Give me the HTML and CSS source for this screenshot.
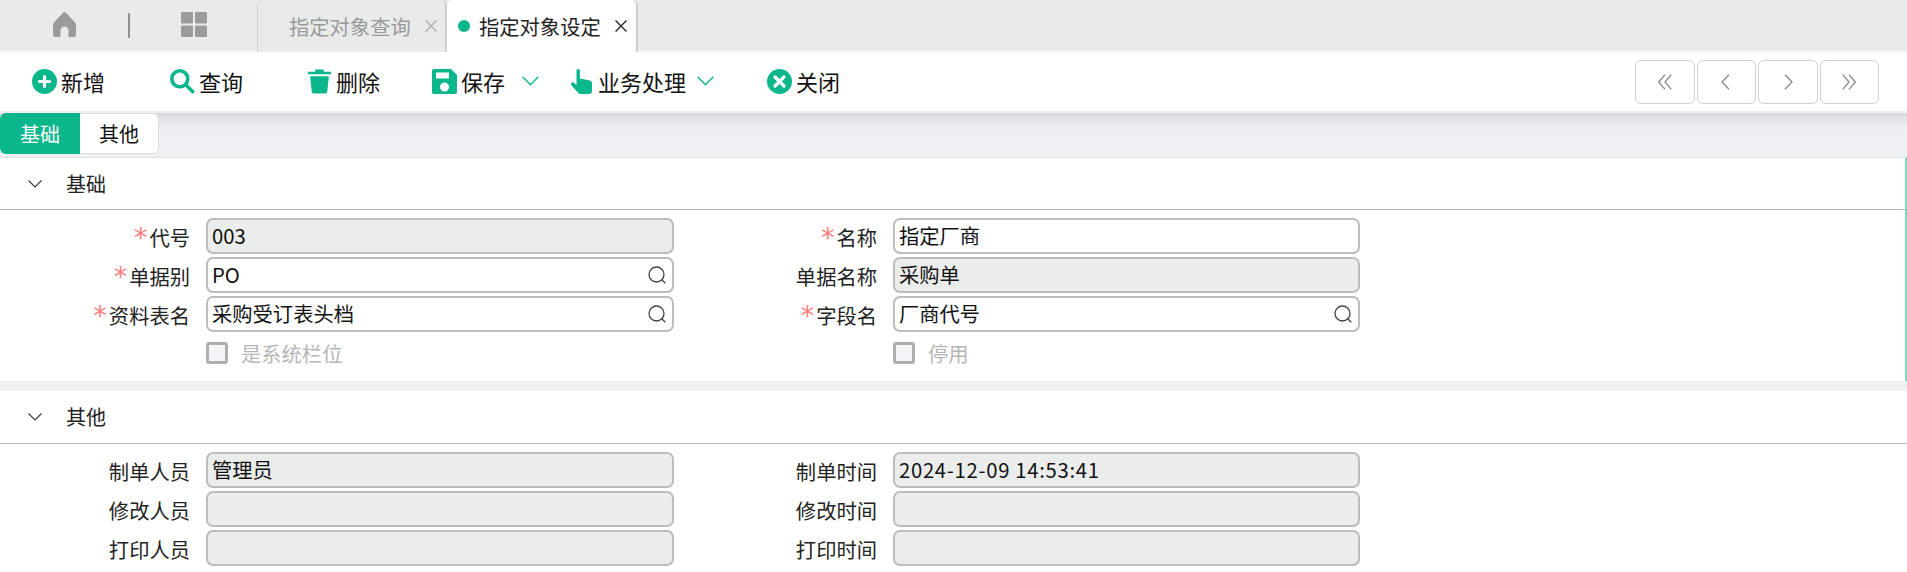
FILE: index.html
```html
<!DOCTYPE html>
<html lang="zh-CN">
<head>
<meta charset="utf-8">
<title>指定对象设定</title>
<link rel="stylesheet" href="styles.css">
</head>
<body>
<header class="tabbar">
  <div class="tab-tools">
    <svg class="ico-home" viewBox="0 0 23 25"><path d="M11.5 0 C12.2 0 12.8.4 13.3.9 L22 10.5 C22.7 11.3 23 12 23 13 V23 C23 24.2 22.2 25 21 25 H15.5 V18.5 C15.5 16.2 13.8 14.5 11.5 14.5 S7.5 16.2 7.5 18.5 V25 H2 C.8 25 0 24.2 0 23 V13 C0 12 .3 11.3 1 10.5 L9.7.9 C10.2.4 10.8 0 11.5 0Z"/></svg>
    <span class="tool-sep"></span>
    <svg class="ico-grid" viewBox="0 0 26 25"><rect width="12" height="11.5" rx="1"/><rect x="14" width="12" height="11.5" rx="1"/><rect y="13.5" width="12" height="11.5" rx="1"/><rect x="14" y="13.5" width="12" height="11.5" rx="1"/></svg>
  </div>
  <div class="tab tab-idle">
    <span class="tab-label">指定对象查询</span>
    <svg class="tab-x" viewBox="0 0 11 11"><path d="M.5.5 10.5 10.5M10.5.5.5 10.5"/></svg>
  </div>
  <div class="tab tab-active">
    <span class="tab-dot"></span>
    <span class="tab-label">指定对象设定</span>
    <svg class="tab-x" viewBox="0 0 11 11"><path d="M.5.5 10.5 10.5M10.5.5.5 10.5"/></svg>
  </div>
</header>

<nav class="toolbar">
  <button class="tool tool-add">
    <svg class="tool-ico" viewBox="0 0 25 25"><circle cx="12.5" cy="12.5" r="12.5"/><path class="cut" d="M12.5 7.5v10M7.5 12.5h10"/></svg>新增
  </button>
  <button class="tool tool-find">
    <svg class="tool-ico" viewBox="0 0 25 25"><circle class="ring" cx="9.800" cy="9.800" r="8"/><path class="ring" d="M15.500 15.500 23.800 23.800"/></svg>查询
  </button>
  <button class="tool tool-del">
    <svg class="tool-ico" viewBox="0 0 24 25"><path d="M0 2.2h7.5V.8C7.5.3 7.8 0 8.3 0h7.4c.5 0 .8.3.8.8v1.4H24V5H0Z"/><path d="M2.2 7h19.6l-1.7 16.2c-.1 1-.9 1.8-2 1.8H5.900c-1.100 0-1.900-.8-2-1.800Z"/></svg>删除
  </button>
  <button class="tool tool-save">
    <svg class="tool-ico" viewBox="0 0 25 25"><path fill-rule="evenodd" d="M2 0H19L25 6V23C25 24.200 24.200 25 23 25H2C.8 25 0 24.200 0 23V2C0 .8.8 0 2 0ZM4 3.500V9.500H17V3.500ZM12.500 13.500A4.500 4.500 0 1 0 12.500 22.500 4.500 4.500 0 1 0 12.500 13.500Z"/></svg>保存
    <svg class="tool-chev" viewBox="0 0 17 10"><path d="M.7.7 8.500 8.800 16.300.7"/></svg>
  </button>
  <button class="tool tool-biz">
    <svg class="tool-ico tool-ico-hand" viewBox="0 0 21 25"><path d="M5.500 1.800C5.500.8 6.200 0 7.200 0S8.900.8 8.900 1.800V9.500L18 11.200C19.800 11.500 21 12.700 21 14.500V22C21 23.800 19.800 25 18 25H9.500C8.300 25 7.500 24.500 6.800 23.600L.5 16.500C-.2 15.600-.1 14.500.7 13.800 1.500 13.100 2.600 13.200 3.300 14L5.500 16.200Z"/></svg>业务处理
    <svg class="tool-chev" viewBox="0 0 17 10"><path d="M.7.7 8.500 8.800 16.300.7"/></svg>
  </button>
  <button class="tool tool-close">
    <svg class="tool-ico" viewBox="0 0 25 25"><circle cx="12.500" cy="12.500" r="12.500"/><path class="cut" d="M8 8 17 17M17 8 8 17"/></svg>关闭
  </button>
  <div class="pager">
    <button class="page-btn"><svg viewBox="0 0 14 16"><path d="M7 .7 .7 8 7 15.300M13.300.7 7 8 13.300 15.300"/></svg></button>
    <button class="page-btn"><svg viewBox="0 0 14 16"><path d="M10 .7 3 8 10 15.300"/></svg></button>
    <button class="page-btn"><svg viewBox="0 0 14 16"><path d="M4 .7 11 8 4 15.300"/></svg></button>
    <button class="page-btn"><svg viewBox="0 0 14 16"><path d="M.7.7 7 8 .7 15.300M7 .7 13.300 8 7 15.300"/></svg></button>
  </div>
</nav>

<main class="content">
  <div class="subtabs">
    <span class="subtab subtab-on">基础</span>
    <span class="subtab">其他</span>
  </div>

  <section class="panel panel-first">
    <h2 class="panel-head"><svg class="panel-chev" viewBox="0 0 14 8"><path d="M.5.500 7 7 13.500.500"/></svg>基础</h2>
    <div class="form">
      <label class="lbl"><i class="req">*</i>代号</label>
      <div class="field ro">003</div>
      <label class="lbl"><i class="req">*</i>名称</label>
      <div class="field">指定厂商</div>

      <label class="lbl"><i class="req">*</i>单据别</label>
      <div class="field">PO<svg class="lens" viewBox="0 0 18 18"><circle cx="8.500" cy="8.500" r="7.500"/><path d="M13.500 13.500 17.300 17.300"/></svg></div>
      <label class="lbl">单据名称</label>
      <div class="field ro">采购单</div>

      <label class="lbl"><i class="req">*</i>资料表名</label>
      <div class="field">采购受订表头档<svg class="lens" viewBox="0 0 18 18"><circle cx="8.500" cy="8.500" r="7.500"/><path d="M13.500 13.500 17.300 17.300"/></svg></div>
      <label class="lbl"><i class="req">*</i>字段名</label>
      <div class="field">厂商代号<svg class="lens" viewBox="0 0 18 18"><circle cx="8.500" cy="8.500" r="7.500"/><path d="M13.500 13.500 17.300 17.300"/></svg></div>

      <span></span>
      <div class="check"><span class="box"></span>是系统栏位</div>
      <span></span>
      <div class="check"><span class="box"></span>停用</div>
    </div>
  </section>

  <section class="panel panel-second">
    <h2 class="panel-head"><svg class="panel-chev" viewBox="0 0 14 8"><path d="M.5.500 7 7 13.500.500"/></svg>其他</h2>
    <div class="form">
      <label class="lbl">制单人员</label>
      <div class="field ro">管理员</div>
      <label class="lbl">制单时间</label>
      <div class="field ro"><span class="stamp">2024-12-09 14:53:41</span></div>

      <label class="lbl">修改人员</label>
      <div class="field ro"></div>
      <label class="lbl">修改时间</label>
      <div class="field ro"></div>

      <label class="lbl">打印人员</label>
      <div class="field ro"></div>
      <label class="lbl">打印时间</label>
      <div class="field ro"></div>
    </div>
  </section>
</main>
</body>
</html>
```

FILE: styles.css
```css
* { box-sizing: border-box; }
html, body { margin: 0; height: 100%; overflow: hidden; }
body {
  background: #fff;
  color: #111;
  font-family: "Noto Sans CJK SC", "Noto Sans", sans-serif;
  font-size: 20.300px;
}

/* top tab strip */
.tabbar {
  display: flex;
  height: 52px;
  background: #e8ebea;
  border-bottom: 2px solid #f1f3f3;
}
.tab-tools {
  width: 257px;
  display: flex;
  align-items: flex-start;
  padding: 12px 0 0 53px;
}
.ico-home { width: 23px; height: 25px; fill: #9b9b9b; }
.tool-sep { width: 2px; height: 25px; margin: 1px 50px 0 52px; background: #8f8f8f; }
.ico-grid { width: 26px; height: 25px; fill: #9b9b9b; margin-left: 1px; }
.tab {
  height: 52px;
  display: flex;
  align-items: center;
  border-radius: 6px 6px 0 0;
  line-height: 1;
  border-right: 2px solid #cfcfcf;
}
.tab-idle {
  width: 190px;
  padding-left: 31px;
  color: #999;
  border-left: 1px solid #cfcfcf;
  background: #e8ebea;
}
.tab-active {
  width: 191px;
  padding-left: 11px;
  color: #222;
  background: #fff;
}
.tab-dot { width: 12px; height: 12px; border-radius: 50%; background: #0ab68b; margin-right: 9px; }
.tab-x { width: 12px; height: 12px; margin-left: 14px; fill: none; stroke: currentColor; stroke-width: 1.200; }
.tab-idle .tab-x { stroke: #aaa; }

/* action bar */
.toolbar {
  height: 61px;
  display: flex;
  align-items: center;
  padding-left: 32px;
  background: #fff;
  border-bottom: 2px solid #f0f0f2;
}
.tool {
  display: flex;
  align-items: center;
  padding: 0;
  border: 0;
  background: none;
  color: #111;
  font: inherit;
  font-size: 22px;
  line-height: 25px;
  white-space: nowrap;
}
.tool-ico { width: 25px; height: 25px; margin-right: 4px; fill: #0ab68b; flex: none; }
.tool-ico-hand { width: 21px; margin-right: 6px; }
.tool-del .tool-ico { width: 23px; margin-right: 5px; }
.ring { fill: none; stroke: #0ab68b; stroke-width: 3.600; }
.cut { fill: none; stroke: #fff; stroke-width: 3.200; stroke-linecap: round; }
.tool-chev { width: 17px; height: 10px; margin: 0 0 2px 17px; fill: none; stroke: #0ab68b; stroke-width: 1.300; }
.tool-biz .tool-chev { margin-left: 11px; }
.tool-add { width: 138px; }
.tool-find { width: 138px; }
.tool-del { width: 124px; }
.tool-save { width: 139px; }
.tool-biz { width: 196px; }
.pager { margin-left: auto; display: flex; gap: 2px; padding-right: 28px; }
.page-btn {
  width: 59.500px;
  height: 44px;
  padding: 0;
  display: flex;
  align-items: center;
  justify-content: center;
  background: #fff;
  border: 1px solid #cfcfcf;
  border-radius: 6px;
}
.page-btn svg { width: 14px; height: 16px; fill: none; stroke: #888; stroke-width: 1.300; }

/* content */
.content {
  height: 459px;
  background: linear-gradient(#d8d9dd 0, #eff0f4 16px);
}
.subtabs { display: flex; height: 41px; font-size: 20px; }
.subtab {
  width: 79px;
  display: flex;
  align-items: center;
  justify-content: center;
  background: #fff;
  border: 1px solid #dcdde2;
  border-left: 0;
  border-radius: 0 6px 6px 0;
  line-height: 1;
}
.subtab-on {
  width: 80px;
  color: #fff;
  background: #0ab68b;
  border: 0;
  border-radius: 6px 0 0 6px;
}
.panel { background: #fff; }
.panel-first {
  margin-top: 3px;
  height: 224px;
  border-top: 1px solid #e3e4e8;
  border-right: 2px solid #7fd8c0;
}
.panel-second { margin-top: 10px; height: 189px; }
.panel-head {
  display: flex;
  align-items: center;
  height: 53px;
  margin: 0;
  padding-left: 28px;
  font-size: 20px;
  font-weight: 400;
  line-height: 1;
  color: #222;
  border-bottom: 1px solid #b5b5b5;
}
.panel-first .panel-head { height: 52px; }
.panel-chev { width: 14px; height: 8px; margin-right: 24px; fill: none; stroke: #333; stroke-width: 1.100; }
.form {
  display: grid;
  grid-template-columns: 206px 468px 219px 467px;
  grid-auto-rows: 36px;
  row-gap: 3px;
  padding-top: 8px;
  line-height: 1;
}
.lbl {
  display: flex;
  align-items: center;
  justify-content: flex-end;
  padding: 3px 16px 0 0;
  color: #222;
}
.req {
  font-style: normal;
  font-size: 27px;
  line-height: 22px;
  height: 22px;
  margin-right: 2px;
  color: #ff7d7d;
  font-family: "DejaVu Sans", sans-serif;
}
.field {
  position: relative;
  display: flex;
  align-items: center;
  padding: 0 4px 1px;
  border: 2px solid #bcbcbc;
  border-radius: 7px;
  background: #fff;
  color: #111;
}
.ro { background: #ebedec; }
.stamp { letter-spacing: .7px; }
.lens {
  position: absolute;
  right: 6px;
  top: 7px;
  width: 18px;
  height: 18px;
  fill: none;
  stroke: #444;
  stroke-width: 1.300;
}
.check {
  display: flex;
  align-items: center;
  color: #b5b5b5;
}
.box {
  width: 22px;
  height: 22px;
  margin-right: 13px;
  background: #f4f5f9;
  border: 3px solid #aeaeae;
  border-radius: 3px;
}
```
